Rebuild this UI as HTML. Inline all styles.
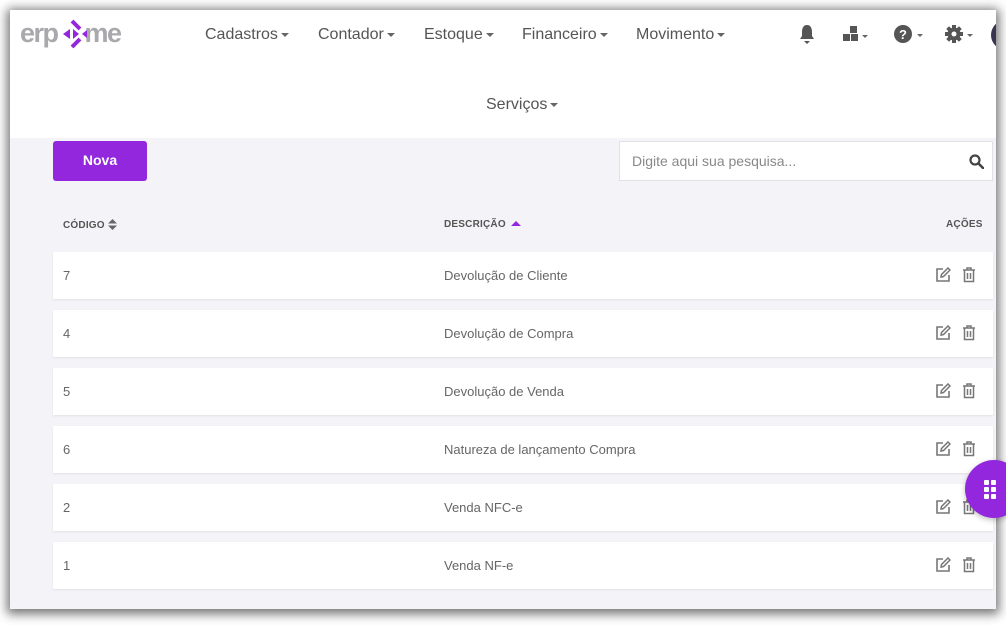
<!DOCTYPE html>
<html><head><meta charset="utf-8"><style>
*{box-sizing:border-box;margin:0;padding:0}
body{width:1006px;height:625px;background:#fff;position:relative;overflow:hidden;font-family:"Liberation Sans",sans-serif}
.win{position:absolute;left:10px;top:10px;width:986px;height:599px;background:#f4f4f8;box-shadow:0 2px 10px 3px rgba(0,0,0,.55);overflow:hidden}
.hdr{position:absolute;left:0;top:0;width:986px;height:128px;background:#fff}
.nav{position:absolute;top:16px;font-size:16px;color:#555}
.caret{display:inline-block;width:0;height:0;border-left:4px solid transparent;border-right:4px solid transparent;border-top:4px solid #666;vertical-align:middle;margin-left:3px}
.abs{position:absolute}
.btn{left:43px;top:131px;width:94px;height:40px;background:#9327de;border-radius:3px;color:#fff;font-weight:bold;font-size:14px;text-align:center;line-height:38px}
.search{left:609px;top:131px;width:374px;height:40px;background:#fff;border:1px solid #e2e2e6;font-size:14px;color:#888;padding:11px 12px}
.th{top:209px;font-size:10px;font-weight:bold;color:#555;letter-spacing:.2px}
.row{position:absolute;left:43px;width:940px;height:47px;background:#fff;box-shadow:0 1px 2px rgba(0,0,0,.08);font-size:13px;color:#666}
.row .c{position:absolute;left:10px;top:16px}
.row .d{position:absolute;left:391px;top:16px}
.row svg{position:absolute;top:15px}
</style></head><body>
<div class="win">
<div class="hdr">
 <div class="abs" style="left:10px;top:8px;font-size:27px;color:#a9a9ad;font-weight:bold;letter-spacing:-1.5px">erp<span style="display:inline-block;width:27px"></span>me</div>
 <svg class="abs" style="left:52px;top:8px" width="30" height="32" viewBox="0 0 30 32"><path d="M10 3 L18 11 M10 29 L18 21" stroke="#9327de" stroke-width="4"/><path d="M1 16 L8 11 L8 21Z M11 11 L17 16 L11 21Z M20 16 L25 12 L25 20Z" fill="#9327de"/></svg>
 <div class="nav" style="left:195px">Cadastros<span class="caret"></span></div>
 <div class="nav" style="left:308px">Contador<span class="caret"></span></div>
 <div class="nav" style="left:414px">Estoque<span class="caret"></span></div>
 <div class="nav" style="left:512px">Financeiro<span class="caret"></span></div>
 <div class="nav" style="left:626px">Movimento<span class="caret"></span></div>
 <div class="nav" style="left:476px;top:86px">Serviços<span class="caret"></span></div>
 <svg class="abs" style="left:788px;top:14px" width="18" height="20" viewBox="0 0 18 20"><path d="M9 1C5 1 4 5 4 8L4 12L2 15L16 15L14 12L14 8C14 5 13 1 9 1Z M6 17L12 17L9 20Z" fill="#555"/></svg>
 <svg class="abs" style="left:832px;top:14px" width="26" height="20" viewBox="0 0 26 20"><rect x="8" y="2" width="7" height="7" fill="#555"/><rect x="1" y="10" width="7" height="7" fill="#555"/><rect x="9" y="10" width="7" height="7" fill="#555"/><path d="M20 11L26 11L23 14Z" fill="#666"/></svg>
 <svg class="abs" style="left:884px;top:14px" width="32" height="20" viewBox="0 0 32 20"><circle cx="9" cy="10" r="9" fill="#555"/><text x="9" y="15" font-size="13" font-weight="bold" fill="#fff" text-anchor="middle" font-family="Liberation Sans">?</text><path d="M23 10L29 10L26 13Z" fill="#666"/></svg>
 <svg class="abs" style="left:935px;top:14px" width="32" height="20" viewBox="0 0 32 20"><g transform="translate(9 10)" fill="#555"><circle r="6.5"/><rect x="-2" y="-9" width="4" height="18"/><rect x="-9" y="-2" width="18" height="4"/><rect x="-2" y="-9" width="4" height="18" transform="rotate(45)"/><rect x="-2" y="-9" width="4" height="18" transform="rotate(-45)"/><circle r="2.5" fill="#fff"/></g><path d="M22 10L28 10L25 13Z" fill="#666"/></svg>
 <div class="abs" style="left:981px;top:10px;width:30px;height:30px;border-radius:50%;background:#3a3550"></div>
</div>
<div class="abs btn">Nova</div>
<div class="abs search">Digite aqui sua pesquisa...
 <svg style="position:absolute;right:8px;top:12px" width="15" height="15" viewBox="0 0 15 15"><circle cx="6" cy="6" r="4.5" fill="none" stroke="#444" stroke-width="2.2"/><path d="M9.5 9.5L14 14" stroke="#444" stroke-width="2.6" stroke-linecap="round"/></svg></div>
<div class="abs th" style="left:53px">CÓDIGO <svg width="9" height="11" viewBox="0 0 9 11" style="vertical-align:-2px"><path d="M0 4.5L4.5 0L9 4.5ZM0 6.5L4.5 11L9 6.5Z" fill="#666"/></svg></div>
<div class="abs th" style="left:434px">DESCRIÇÃO <svg width="10" height="6" viewBox="0 0 10 6" style="margin-left:2px"><path d="M0 5L5 0L10 5Z" fill="#9327de"/></svg></div>
<div class="abs th" style="left:936px">AÇÕES</div>

<div class="row" style="top:242px"><span class="c">7</span><span class="d">Devolução de Cliente</span></div>
<div class="row" style="top:300px"><span class="c">4</span><span class="d">Devolução de Compra</span></div>
<div class="row" style="top:358px"><span class="c">5</span><span class="d">Devolução de Venda</span></div>
<div class="row" style="top:416px"><span class="c">6</span><span class="d">Natureza de lançamento Compra</span></div>
<div class="row" style="top:474px"><span class="c">2</span><span class="d">Venda NFC-e</span></div>
<div class="row" style="top:532px"><span class="c">1</span><span class="d">Venda NF-e</span></div>
</div>
<div id="icons"></div>
<div class="abs" style="left:965px;top:460px;width:58px;height:58px;border-radius:50%;background:#9327de;box-shadow:0 2px 6px rgba(0,0,0,.25)"></div>
<svg class="abs" style="left:983px;top:479px" width="14" height="20" viewBox="0 0 14 20"><g fill="#fff"><rect x="1" y="1" width="5" height="5" rx="1"/><rect x="8" y="1" width="5" height="5" rx="1"/><rect x="1" y="8" width="5" height="5" rx="1"/><rect x="8" y="8" width="5" height="5" rx="1"/><rect x="1" y="15" width="5" height="5" rx="1"/><rect x="8" y="15" width="5" height="5" rx="1"/></g></svg>
<script>
var h='';[267,325,383,441,499,557].forEach(function(y){
h+='<svg class="abs" style="left:935px;top:'+y+'px;position:absolute" width="16" height="16" viewBox="0 0 16 16"><path d="M8 2H2V14H14V8" fill="none" stroke="#777" stroke-width="1.6"/><path d="M6 10L6.5 7.5L13 1L15 3L8.5 9.5Z" fill="none" stroke="#777" stroke-width="1.5"/></svg>';
h+='<svg class="abs" style="left:962px;top:'+y+'px;position:absolute" width="14" height="16" viewBox="0 0 14 16"><path d="M1 3H13M5 3V1H9V3M2.5 3.5V14.5H11.5V3.5M5.5 6V12M8.5 6V12" fill="none" stroke="#777" stroke-width="1.5"/></svg>';});
document.getElementById('icons').innerHTML=h;
</script>
</body></html>
